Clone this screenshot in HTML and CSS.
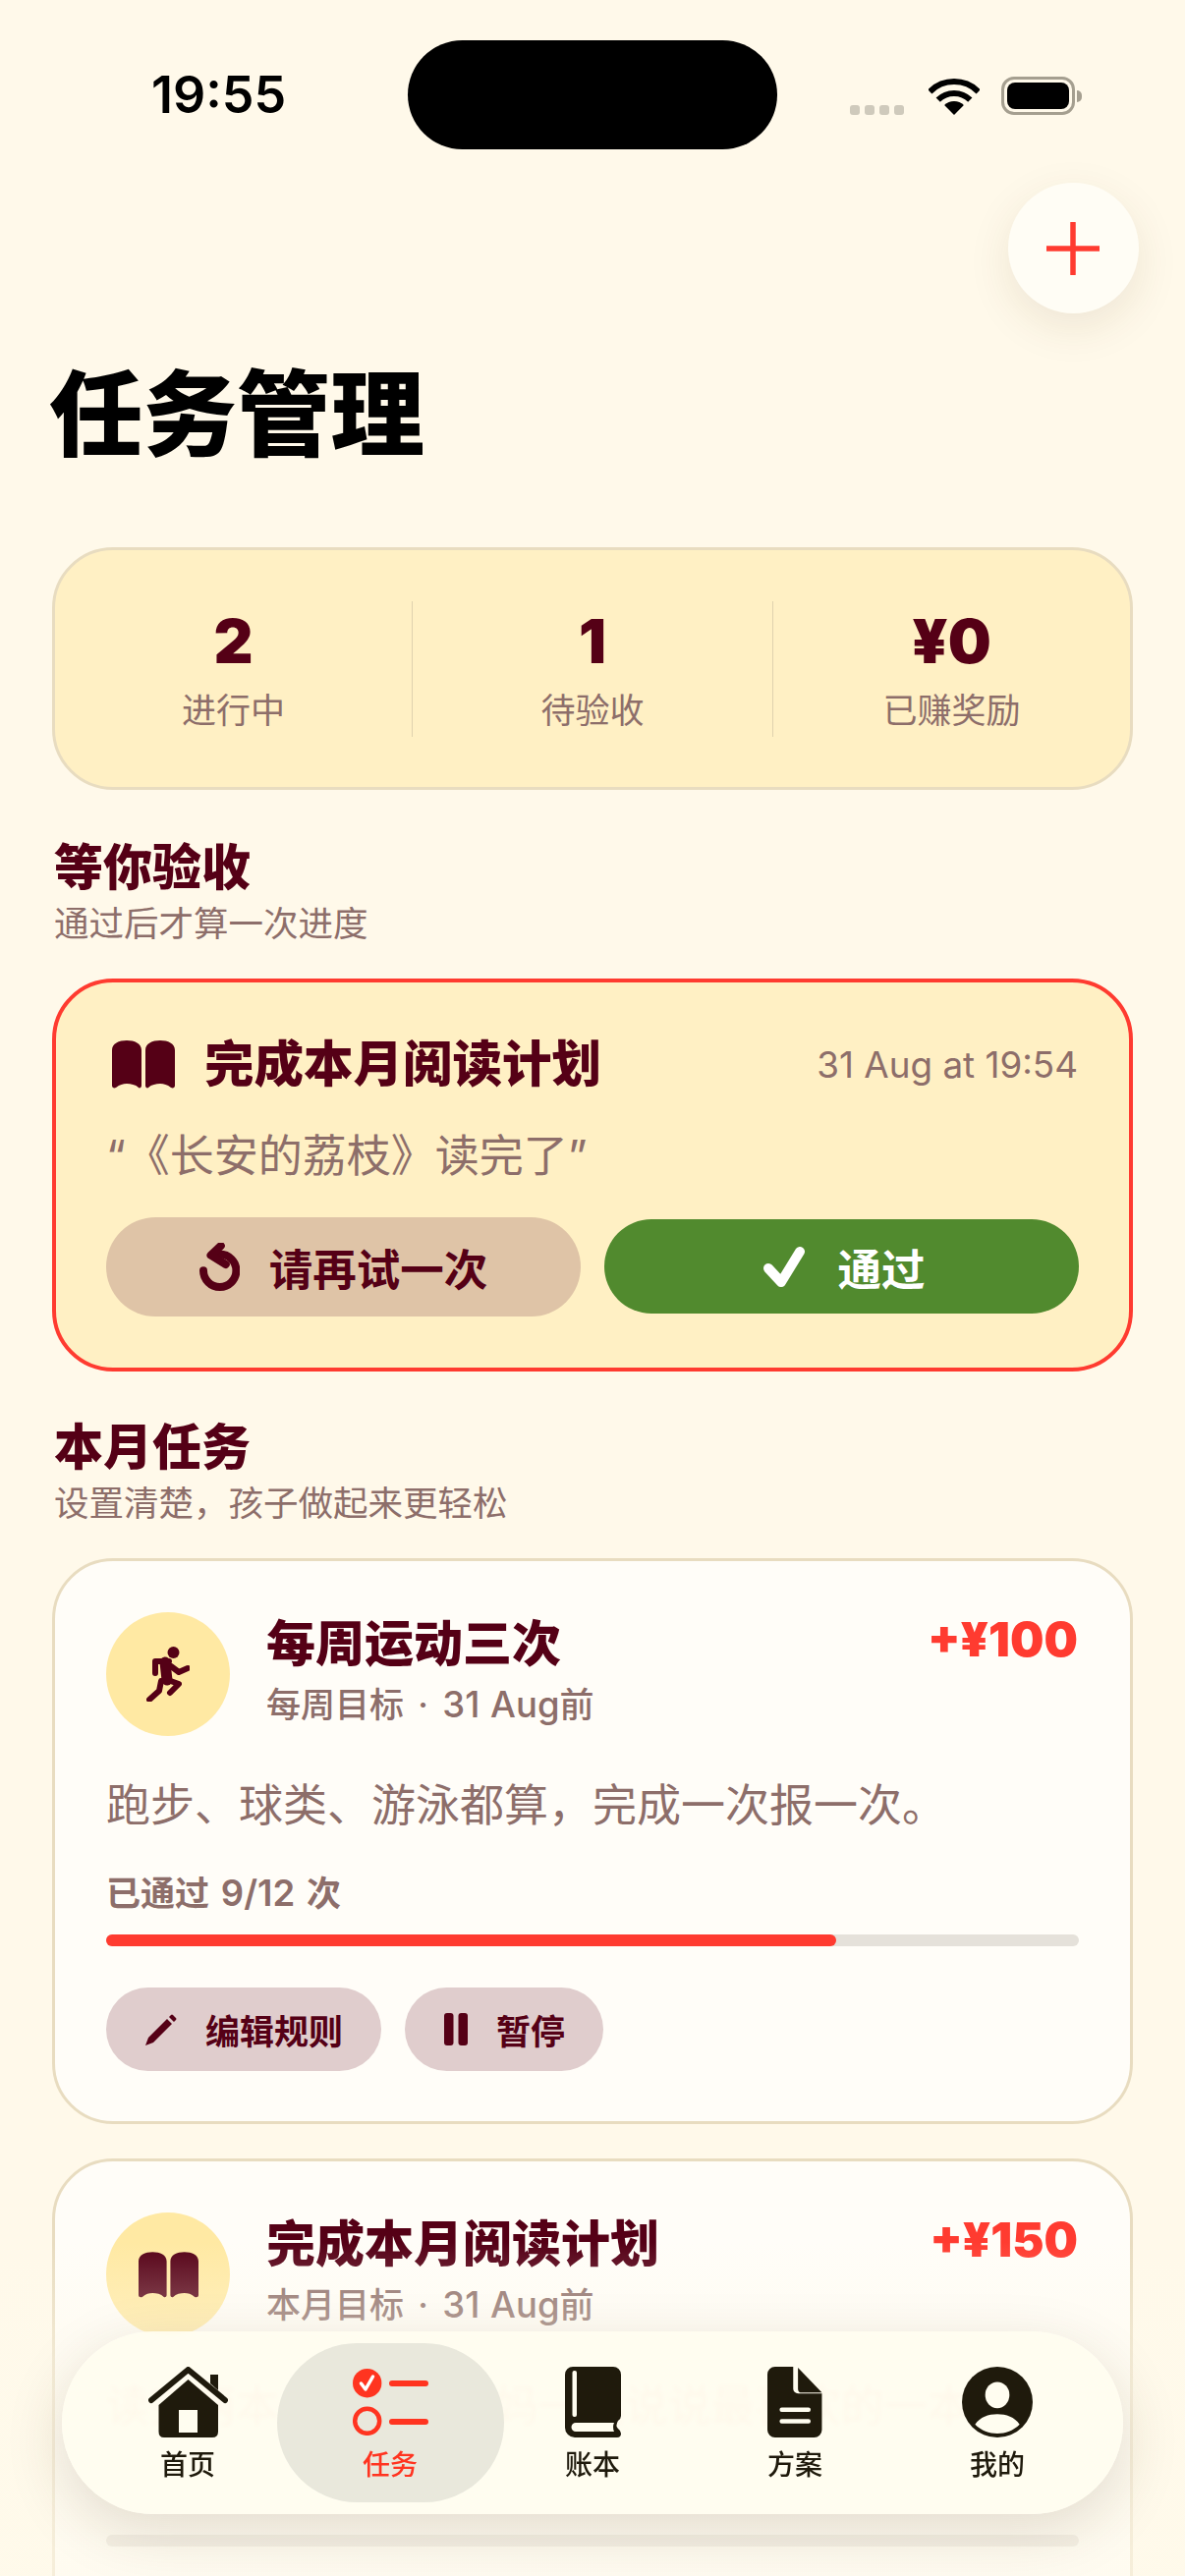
FILE: index.html
```html
<!DOCTYPE html>
<html lang="zh-CN">
<head>
  <meta charset="UTF-8">
  <meta name="viewport" content="width=device-width, initial-scale=1.0">
  <title>任务管理</title>
  <link rel="stylesheet" href="styles.css">
</head>
<body>
  <div class="app">
    <div class="status">
      <span class="time">19:55</span>
      <div class="island"></div>
      <div class="status-icons">
        <div class="dots"><i></i><i></i><i></i><i></i></div>
        <svg class="wifi" viewBox="0 0 52 37"><path d="M26 37 16.100 27.100A14 14 0 0 1 35.900 27.100Z"/><path class="wifi-arc" d="M9.700 21.700A23 23 0 0 1 42.300 21.700"/><path class="wifi-arc" d="M1.300 13.300A35 35 0 0 1 50.700 13.300"/></svg>
        <div class="battery"><div class="battery-fill"></div></div>
        <div class="battery-nub"></div>
      </div>
    </div>

    <main class="page">
      <div class="top-row">
        <button class="add-btn">
          <svg viewBox="0 0 54 54"><path d="M27 1V53M1 27H53"/></svg>
        </button>
      </div>
      <h1>任务管理</h1>

      <section class="stats">
        <div class="stat"><b>2</b><span>进行中</span></div>
        <div class="stat"><b>1</b><span>待验收</span></div>
        <div class="stat"><b>¥0</b><span>已赚奖励</span></div>
      </section>

      <h2 class="first">等你验收</h2>
      <p class="section-sub">通过后才算一次进度</p>

      <section class="review">
        <div class="review-head">
          <svg class="book-icon" viewBox="0 0 64 49"><path d="M0 10C0 3 7 0 15 0 23 0 30 3 30 10V46C30 48 28 49 27 48 24 45 19 44 15 44 11 44 8 45 4 48 2 49 0 48 0 46ZM64 10C64 3 57 0 49 0 41 0 34 3 34 10V46C34 48 36 49 37 48 40 45 45 44 49 44 53 44 56 45 60 48 62 49 64 48 64 46Z"/></svg>
          <span class="review-title">完成本月阅读计划</span>
          <span class="review-date">31 Aug at 19:54</span>
        </div>
        <p class="quote">“《长安的荔枝》读完了”</p>
        <div class="review-actions">
          <button class="btn-retry">
            <svg viewBox="0 0 41 49"><path d="M20.700 11.600A16.700 16.700 0 1 1 4 28.300"/><path d="M21.800 3 11.500 12.700 26.800 22"/></svg>
            请再试一次
          </button>
          <button class="btn-pass">
            <svg viewBox="0 0 43 41"><path d="M5 22 18 36 37 5"/></svg>
            通过
          </button>
        </div>
      </section>

      <h2>本月任务</h2>
      <p class="section-sub">设置清楚，孩子做起来更轻松</p>

      <section class="task">
        <div class="task-head">
          <div class="task-icon">
            <svg class="run-icon" viewBox="0 0 44 56"><circle class="fill" cx="27.500" cy="6" r="6"/><path class="thin" d="M23 15H9V27M25 20 33 26 42 22M19 33 33 38 24 47M15 35 13 45 3 54"/><path class="thick" d="M19 16 21 34"/></svg>
          </div>
          <div class="task-text">
            <div class="task-title">每周运动三次</div>
            <div class="task-meta">每周目标 · <span class="latin">31 Aug</span>前</div>
          </div>
          <div class="reward">+¥100</div>
        </div>
        <p class="task-desc">跑步、球类、游泳都算，完成一次报一次。</p>
        <div class="progress-label">已通过 <span class="latin">9/12</span> 次</div>
        <div class="bar"><div class="bar-fill" style="width: 75%"></div></div>
        <div class="task-actions">
          <button class="btn-soft">
            <svg class="pencil" viewBox="0 0 32 32"><path d="M0 32 3 24 22 5 27 10 8 29ZM24 3 26 1Q27 0 28 1L31 4Q32 5 31 6L29 8Z"/></svg>
            编辑规则
          </button>
          <button class="btn-soft">
            <svg class="pause" viewBox="0 0 24 33"><rect width="9.500" height="33" rx="3"/><rect x="14.500" width="9.500" height="33" rx="3"/></svg>
            暂停
          </button>
        </div>
      </section>

      <section class="task">
        <div class="task-head">
          <div class="task-icon">
            <svg class="book-lg" viewBox="0 0 64 49"><path d="M0 10C0 3 7 0 15 0 23 0 30 3 30 10V46C30 48 28 49 27 48 24 45 19 44 15 44 11 44 8 45 4 48 2 49 0 48 0 46ZM64 10C64 3 57 0 49 0 41 0 34 3 34 10V46C34 48 36 49 37 48 40 45 45 44 49 44 53 44 56 45 60 48 62 49 64 48 64 46Z"/></svg>
          </div>
          <div class="task-text">
            <div class="task-title">完成本月阅读计划</div>
            <div class="task-meta">本月目标 · <span class="latin">31 Aug</span>前</div>
          </div>
          <div class="reward">+¥150</div>
        </div>
        <p class="task-desc under-bar">读完两本书后，和爸妈一起说说最喜欢的一本。</p>
        <div class="progress-label"></div>
        <div class="bar"></div>
      </section>
    </main>

    <div class="wash"></div>

    <nav class="tabbar">
      <a class="tab">
        <svg viewBox="0 0 81 72"><path class="roof" d="M3 34 40.500 3 78 34"/><path d="M63 8H71V24L63 17Z"/><path d="M40.500 13 71 39V66Q71 72 65 72H16Q10.500 72 10.500 66V39Z"/><rect class="cut" x="31" y="44" width="19" height="23"/></svg>
        <span>首页</span>
      </a>
      <a class="tab active">
        <svg class="task-tab-icon" viewBox="0 0 77 68"><circle class="red" cx="14.700" cy="14.700" r="14.700"/><path class="tick" d="M8.500 15 13 21 20.500 8"/><circle class="ring" cx="14.700" cy="53.300" r="12.500"/><path class="dash" d="M40 15H74M40 54H74"/></svg>
        <span>任务</span>
      </a>
      <a class="tab">
        <svg viewBox="0 0 57 72"><path d="M8 0H49A8 8 0 0 1 57 8V50Q57 53 54 55 51 60 54 63 57 65 57 68 57 72 53 72H10A10 10 0 0 1 0 62V8A8 8 0 0 1 8 0Z"/><rect class="cut" x="7.500" y="4" width="4.500" height="47" rx="2"/><path class="cut" d="M11 57H50Q48 61 50 66H11A4.500 4.500 0 0 1 11 57Z"/></svg>
        <span>账本</span>
      </a>
      <a class="tab">
        <svg viewBox="0 0 57 74"><path d="M8 0H27V23A5 5 0 0 0 32 28H57V66A8 8 0 0 1 49 74H8A8 8 0 0 1 0 66V8A8 8 0 0 1 8 0Z"/><path d="M32 1 57 27H36A4 4 0 0 1 32 23Z"/><path class="doc-line" d="M15 45H43M15 57H43"/></svg>
        <span>方案</span>
      </a>
      <a class="tab">
        <svg viewBox="0 0 70 70"><circle cx="35" cy="35" r="35"/><ellipse class="cut" cx="35" cy="28" rx="12" ry="13"/><path class="cut" d="M13 57C18 50 26 47 35 47 44 47 52 50 57 57 51 63 43 66 35 66 27 66 19 63 13 57Z"/></svg>
        <span>我的</span>
      </a>
    </nav>
  </div>
</body>
</html>
```

FILE: styles.css
```css
* { box-sizing: border-box; }
html, body { margin: 0; padding: 0; }
body { font-family: Inter, "Noto Sans CJK SC", sans-serif; background: #fff9ea; color: #550016; text-spacing-trim: space-all; }
button { font-family: inherit; border: none; cursor: pointer; text-spacing-trim: space-all; }
p, h1, h2 { margin: 0; }

.app { position: relative; width: 1206px; height: 2622px; overflow: hidden; background: #fff9ea; }

/* status bar */
.status { display: flex; height: 152px; padding: 41px 0 0 154px; }
.time { width: 261px; padding-top: 26px; font-size: 52px; line-height: 60px; font-weight: 600; color: #000; }
.island { width: 376px; height: 111px; border-radius: 56px; background: #000; }
.status-icons { display: flex; align-items: flex-end; height: 76px; margin-left: 74px; }
.dots { display: flex; gap: 5px; margin-right: 25px; }
.dots i { width: 10px; height: 10px; border-radius: 3px; background: #cfcabc; }
.wifi { width: 52px; height: 37px; fill: #000; margin-right: 22px; }
.wifi-arc { fill: none; stroke: #000; stroke-width: 6; }
.battery { width: 75px; height: 39px; padding: 3px; border: 3px solid #a59f90; border-radius: 13px; }
.battery-fill { width: 100%; height: 100%; border-radius: 8px; background: #000; }
.battery-nub { width: 5px; height: 12px; margin: 0 0 13px 2px; border-radius: 0 6px 6px 0; background: #a59f90; }

/* header */
.page { padding: 0 53px; }
.top-row { display: flex; justify-content: flex-end; padding-top: 34px; }
.add-btn { display: flex; align-items: center; justify-content: center; width: 133px; height: 133px; margin-right: -6px; padding: 0 2px 0 0; border-radius: 50%; background: #fffdf5; box-shadow: 0 14px 44px rgba(90, 60, 20, 0.1); }
.add-btn svg { width: 54px; height: 54px; fill: none; stroke: #ff3b30; stroke-width: 5.500; stroke-linecap: round; }
h1 { margin-top: 47px; margin-bottom: -1px; margin-left: -3px; font-size: 95.500px; line-height: 112px; font-weight: 900; color: #000; }

/* stats */
.stats { display: grid; grid-template-columns: 363px 367px 1fr; align-items: center; height: 247px; margin-top: 80px; border: 3px solid #e8dcc0; border-radius: 62px; background: #fff0c4; }
.stat { display: flex; flex-direction: column; align-items: center; justify-content: center; height: 138px; padding-top: 5px; }
.stat + .stat { border-left: 1px solid #dfd2ae; }
.stat b { font-size: 62px; line-height: 68px; font-weight: 900; }
.stat span { margin-top: 11px; font-size: 35px; line-height: 50px; color: #8d6e6a; }

/* section titles */
h2 { margin-top: 47px; margin-left: 2px; font-size: 50px; line-height: 60px; font-weight: 900; }
h2.first { margin-top: 49px; }
.section-sub { margin: 6px 0 33px 2px; font-size: 35.500px; line-height: 44px; color: #8d6e6a; }

/* waiting for review */
.review { height: 400px; padding: 53px 51px 0; border: 4px solid #ff3b30; border-radius: 62px; background: #fff0c4; }
.review-head { display: flex; align-items: center; height: 60px; }
.book-icon { width: 64px; height: 49px; margin-left: 6px; fill: #550016; }
.review-title { margin-left: 30px; font-size: 50.500px; line-height: 60px; font-weight: 900; }
.review-date { margin-left: auto; margin-right: 1px; font-size: 36.800px; color: #8d6e6a; }
.quote { margin-top: 34px; font-size: 45px; line-height: 60px; color: #8d6e6a; }
.review-actions { display: grid; grid-template-columns: 1fr 1fr; align-items: center; gap: 24px; margin-top: 32px; }
.review-actions button { display: flex; align-items: center; justify-content: center; border-radius: 52px; font-size: 44.500px; font-weight: 700; }
.review-actions svg { fill: none; stroke-linecap: round; stroke-linejoin: round; }
.btn-retry { height: 101px; gap: 30px; background: #dfc4a7; color: #550016; }
.btn-retry svg { width: 41px; height: 49px; stroke: #550016; stroke-width: 8; }
.btn-pass { height: 96px; gap: 32px; margin-top: -1px; padding: 0 0 0 6px; background: #518a2e; color: #fff; }
.btn-pass svg { width: 43px; height: 41px; stroke: #fff; stroke-width: 10; }

/* task cards */
.task { margin-bottom: 35px; height: 576px; padding: 52px 52px 0; border: 3px solid #e8dcc0; border-radius: 62px; background: #fffdf8; }
.task-head { display: flex; height: 126px; }
.task-icon { display: flex; align-items: center; justify-content: center; flex: none; width: 126px; height: 126px; border-radius: 50%; background: #ffe9a3; }
.run-icon { width: 44px; height: 56px; }
.run-icon .fill { fill: #550016; }
.run-icon .thin, .run-icon .thick { fill: none; stroke: #550016; stroke-linecap: round; stroke-linejoin: round; }
.run-icon .thin { stroke-width: 6; }
.run-icon .thick { stroke-width: 11; }
.book-lg { width: 61px; height: 47px; fill: #550016; }
.task-text { margin: 2px 0 0 37px; }
.task-title { font-size: 50px; line-height: 60px; font-weight: 900; }
.task-meta { margin-top: 10px; font-size: 35px; line-height: 44px; font-weight: 500; color: #8d6e6a; word-spacing: 5px; }
.latin { font-size: 36.500px; word-spacing: 1px; }
.reward { margin: 1px 1px 0 auto; font-size: 48.500px; line-height: 54px; font-weight: 900; color: #ff3b30; }
.task-desc { margin-top: 41px; font-size: 45px; line-height: 60px; color: #8d6e6a; white-space: nowrap; }
.task-desc.under-bar { font-size: 44px; color: #e0695c; }
.progress-label { height: 44px; margin-top: 37px; font-size: 35px; line-height: 44px; font-weight: 600; color: #8d6e6a; word-spacing: 3px; }
.bar { height: 12px; margin-top: 20px; border-radius: 6px; background: #e5e1da; }
.bar-fill { height: 100%; border-radius: 6px; background: #ff3b30; }
.task-actions { display: flex; gap: 24px; margin-top: 42px; }
.btn-soft { display: flex; align-items: center; height: 85px; padding: 0 39px 0 40px; gap: 29px; border-radius: 43px; background: #e0cdcd; color: #550016; font-size: 35px; font-weight: 700; }
.btn-soft svg { fill: #550016; }
.pencil { width: 32px; height: 32px; }
.pause { width: 24px; height: 33px; }

/* fade + tab bar lie over the page */
.wash { position: absolute; left: 0; right: 0; bottom: 0; height: 340px; background: linear-gradient(rgba(255, 250, 235, 0), rgba(255, 250, 235, 0.6) 45%); }
.tabbar { position: absolute; left: 63px; right: 63px; bottom: 63px; display: flex; height: 186px; padding: 12px 25px 0; border-radius: 93px; background: rgba(255, 253, 240, 0.92); box-shadow: 0 18px 60px rgba(70, 50, 20, 0.15); backdrop-filter: blur(2px); }
.tab { flex: 1; display: flex; flex-direction: column; align-items: center; height: 162px; padding-top: 24px; border-radius: 81px; color: #1f1a0c; }
.tab svg { height: 72px; width: auto; fill: #1f1a0c; }
.tab span { margin-top: 8px; font-size: 28px; line-height: 40px; font-weight: 500; }
.tab .cut { fill: #fffdf0; }
.tab .roof { fill: none; stroke: #1f1a0c; stroke-width: 6; stroke-linecap: round; stroke-linejoin: round; }
.tab .doc-line { fill: none; stroke: #fffdf0; stroke-width: 4.500; stroke-linecap: round; }
.tab.active { flex: none; width: 231px; margin: 0 -12.500px; background: #e9e8dc; color: #ff3420; }
.tab.active .task-tab-icon { height: 68px; margin: 2px 0; }
.tab.active .red { fill: #ff3420; }
.tab.active .tick { fill: none; stroke: #fff; stroke-width: 3.500; stroke-linecap: round; stroke-linejoin: round; }
.tab.active .ring { fill: none; stroke: #ff3420; stroke-width: 4.500; }
.tab.active .dash { fill: none; stroke: #ff3420; stroke-width: 6; stroke-linecap: round; }
```
